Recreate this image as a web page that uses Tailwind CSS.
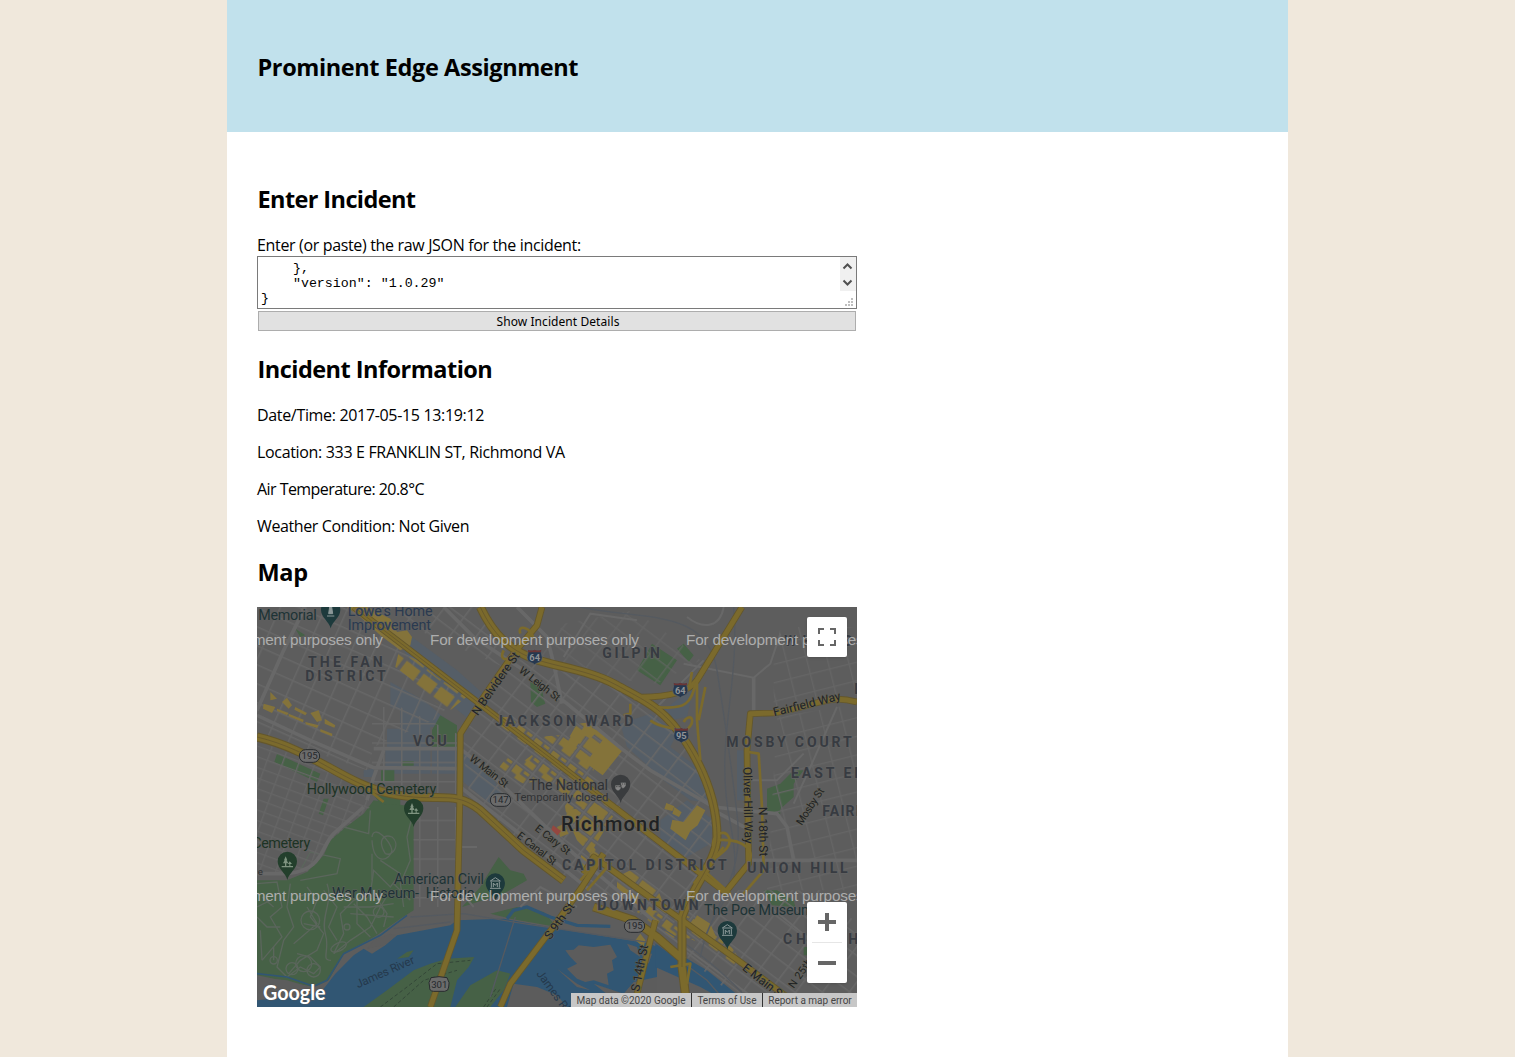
<!DOCTYPE html>
<html lang="en">
<head>
<meta charset="utf-8">
<title>Prominent Edge Assignment</title>
<script src="https://cdn.jsdelivr.net/npm/@tailwindcss/browser@4"></script>
</head>
<body class="bg-[#f0e8dc] text-black font-['Open_Sans',sans-serif] h-[1057px] overflow-hidden">
<div class="w-[1061px] ml-[227px] h-[1057px] bg-white">
  <header class="h-[132px] bg-[#c1e1ec] pl-[30.500px] pt-[51px]">
    <h1 class="text-[23.500px] leading-8 font-bold whitespace-nowrap tracking-[-0.4px]">Prominent Edge Assignment</h1>
  </header>
  <main class="pl-[30px] pt-[51px] w-[630px]">
    <h2 class="pl-[0.5px] text-[23.500px] leading-8 font-bold tracking-[-0.6px]">Enter Incident</h2>
    <p class="mt-5 text-[16px] leading-5 h-[21px] whitespace-nowrap tracking-[-0.34px]">Enter (or paste) the raw JSON for the incident:</p>
    <div class="relative w-[600px] h-[53px] border border-[#7a7a7a] bg-white pl-[3px] pt-1 overflow-hidden">
<pre class="font-['Liberation_Mono',monospace] text-[13.300px] leading-[15px]">    },
    "version": "1.0.29"
}</pre>
      <div class="absolute right-0 top-0 w-4 h-[34px] bg-[#f0f0f0]">
        <svg class="block" width="16" height="34" viewBox="0 0 16 34" fill="none" stroke="#505050" stroke-width="2"><path d="M3.500 11.500 7.500 7.500l4 4M3.500 23.500 7.500 27.500l4-4"/></svg>
      </div>
      <svg class="absolute right-[3px] bottom-[2px]" width="8" height="8" fill="#bfbfbf"><path d="M6 0h2v2H6zM3 3h2v2H3zM6 3h2v2H6zM0 6h2v2H0zM3 6h2v2H3zM6 6h2v2H6z"/></svg>
    </div>
    <button class="block mt-[2px] ml-px w-[598px] h-5 border border-[#adadad] bg-[#e1e1e1] text-[12px] leading-[19px] font-['Noto_Sans',sans-serif] text-center"><span class="tracking-[0.07px] pl-[2px]">Show Incident Details</span></button>
    <h2 class="mt-[22px] pl-[0.5px] text-[23.500px] leading-8 font-bold tracking-[-0.52px]">Incident Information</h2>
    <div class="mt-5 flex flex-col gap-4 text-[16px] leading-[21px] whitespace-nowrap tracking-[-0.33px]">
      <p>Date/Time: 2017-05-15 13:19:12</p>
      <p>Location: 333 E FRANKLIN ST, Richmond VA</p>
      <p class="tracking-[-0.55px]">Air Temperature: 20.8°C</p>
      <p class="tracking-[-0.38px]">Weather Condition: Not Given</p>
    </div>
    <h2 class="mt-[19px] pl-[0.5px] text-[23.500px] leading-8 font-bold tracking-[-0.3px]">Map</h2>
    <div class="relative mt-[19px] w-[600px] h-[400px] overflow-hidden bg-[#5d5d5d]">
      <svg class="block" width="600" height="400" viewBox="0 0 1800 1200" font-family="Roboto, sans-serif">
        <defs>
          <pattern id="grid" width="64" height="50" patternUnits="userSpaceOnUse" patternTransform="rotate(37)"><path d="M0 2H64M2 0V50" stroke="#676767" stroke-width="5" fill="none"/></pattern>
          <pattern id="shops" width="64" height="50" patternUnits="userSpaceOnUse" patternTransform="rotate(37)"><path d="M9 9H34V26H60V45H28V34H9zM42 9H60V18H42z" fill="#84733a"/></pattern>
          <pattern id="blocks" width="64" height="50" patternUnits="userSpaceOnUse" patternTransform="rotate(37)"><path d="M8 8H60V46H8z" fill="#84733a"/></pattern>
          <pattern id="fan" width="62" height="52" patternUnits="userSpaceOnUse" patternTransform="rotate(24)"><path d="M0 2H62M2 0V52" stroke="#676767" stroke-width="5" fill="none"/></pattern>
          <pattern id="fine" width="46" height="30" patternUnits="userSpaceOnUse" patternTransform="rotate(20)"><path d="M0 2H46M2 0V30" stroke="#656565" stroke-width="4" fill="none"/></pattern>
          <pattern id="sq" width="54" height="58" patternUnits="userSpaceOnUse"><path d="M0 2H54M2 0V58" stroke="#676767" stroke-width="5" fill="none"/></pattern>
          <pattern id="east" width="60" height="54" patternUnits="userSpaceOnUse" patternTransform="rotate(-14)"><path d="M0 2H60M2 0V54" stroke="#656565" stroke-width="4" fill="none"/></pattern>
          <path id="pin" d="M0 42C-5 20-29 10-29-14a29 29 0 0 1 58 0C29 10 5 20 0 42z"/>
          <g id="museum" fill="none" stroke="#8b9898" stroke-width="3"><path d="M-15-18 0-28 15-18zM-12-16V2M12-16V2M-16 4H16M-6 0v-12l6 7 6-7V0"/></g>
          <g id="tree" fill="#7f9480"><path d="M-5-32-10-20h2l-5 9h6v8h4v-8h6l-5-9h2zM7-17 2-9h4v6h3v-6h5zM-17-3h34v4h-34z"/></g>
          <g id="shield"><path d="M-20-20Q-10-15 0-20 10-15 20-20C17-8 26 0 21 11 16 20 5 19 0 25-5 19-16 20-21 11-26 0-17-8-20-20z" fill="#26384f" stroke="#5f6468" stroke-width="2"/><path d="M-20-20Q-10-15 0-20 10-15 20-20L19-12H-19z" fill="#6b3535"/></g>
        </defs>
        <rect width="1800" height="1200" fill="#5d5d5d"/>

        <!-- campus and hospital areas -->
        <g fill="#555e67">
          <path d="M465 90 600 190 700 280 640 340 590 300 500 230 470 180 440 130zM400 225 500 280 600 365 520 360 520 420 390 420 390 365 430 365 430 310 400 300zM385 425H520V500H385zM525 430H600V500H525zM320 490 350 485 350 510 320 510zM615 430 700 500 760 600 700 590 612 520z"/>
          <path d="M1090 350 1180 320 1260 380 1240 420 1320 480 1370 590 1300 580 1220 520 1110 420zM1220 310 1310 240 1290 330 1240 340zM1440 430h32v150h-32zM1210 640 1290 580 1370 640 1360 710 1290 750 1210 700z"/>
        </g>
        <!-- parks -->
        <g fill="#466146">
          <path d="M0 820 90 820 150 795 200 745 220 700 260 665 320 620 335 600 350 580 470 600 470 910 430 935 360 985 260 1040 215 1120 170 1140 0 1105z"/>
          <path d="M60 440 190 500 180 525 52 465zM550 325 600 355V420H525V370zM372 490H412V522H372zM435 462H470V476H435zM350 565 430 570 430 595 370 590zM115 65 145 85 130 90zM200 575 215 575 198 625 185 620z"/>
          <path d="M820 225 855 245 860 275 865 290 840 300 822 285zM1140 190 1185 110 1260 160 1210 235zM1260 125 1280 110 1310 145 1295 165zM1530 545 1570 530 1610 490 1640 490 1610 530 1610 570 1560 615 1530 615zM1520 850 1560 850 1610 880 1615 900 1545 895zM1535 598h35v22h-35z"/>
          <path d="M725 750 760 790 800 800 810 820 740 860 615 900 670 840 700 790zM700 920 780 900 860 915 900 960 760 935zM1640 1020h30v25h-30z"/>
        </g>
        <!-- cemetery paths -->
        <g fill="none" stroke="#5b665c" stroke-width="4">
          <path d="M470 610 450 690 460 760 430 830 440 900M345 690C350 650 400 700 405 730 400 760 350 780 345 700M385 740C360 700 380 680 405 690 430 710 410 750 385 740M370 760 430 800 400 840 350 790 340 860 290 880 250 920 260 980 230 1040M150 840 180 880 160 930 200 980 180 1030 130 1060 95 1100M100 830 90 900 110 960 80 1000 60 1080 90 1110 130 1080 170 1100 190 1080 160 1050 120 1040M0 830 60 825 75 900 40 930 75 990 15 1060M15 870 50 900M10 970 15 1060M50 1020v40M130 820 240 800 250 755 160 735 130 790M290 890 330 930 360 980M400 850 370 900 340 960 280 1000 230 1040M140 950 190 960M280 920 410 930M110 1010 180 950 150 900M340 610 335 680 260 660"/>
          <path d="M210 830C230 880 190 930 205 980S190 1060 222 1060M200 850 240 900 215 960 240 1000M300 880 300 950 340 990M350 860 390 920 380 960M260 900 340 900 410 890M345 740 345 820M410 830 460 880M0 900 40 880M0 930 30 960 70 960M120 870 150 860"/>
          <circle cx="160" cy="940" r="28"/><circle cx="140" cy="1070" r="24"/><circle cx="170" cy="1090" r="20"/><circle cx="105" cy="1085" r="18"/><circle cx="50" cy="1060" r="11"/><circle cx="270" cy="960" r="9"/><circle cx="365" cy="915" r="16"/><ellipse cx="245" cy="1020" rx="25" ry="12" transform="rotate(-25 245 1020)"/>
        </g>

        <!-- river -->
        <path fill="#315673" d="M0 1180 150 1165 200 1145 235 1100 290 1045 320 1025 345 1040 385 1015 420 985 580 955 600 940 740 935 900 965 1180 1010 1200 1020V1200H0z"/>
        <path fill="#315673" d="M1195 1010 1290 1055 1350 1090 1450 1170 1440 1200 1330 1140 1195 1080z"/>
        <path fill="none" stroke="#315673" stroke-width="5" d="M0 1100 90 1110 170 1138 210 1120 260 1040 370 985 450 925"/>
        <path fill="none" stroke="#315673" stroke-width="10" d="M750 935 770 910 810 900 880 930 960 955 1060 958"/>
        <g fill="#5c5c5c">
          <path d="M0 1110 90 1120 190 1150 120 1163 0 1158zM925 1030 950 1028 965 1015 1010 1020 1060 1013 1080 1050 1065 1060 1070 1090 1050 1100 1055 1135 1010 1120 985 1125 960 1115 930 1085 960 1070 940 1050zM1010 1130 1100 1160 1130 1125 1200 1110V1200H1100zM1110 1010 1140 1020 1150 1050 1120 1030zM1150 1040 1185 1040 1175 1070zM770 1130 840 1140 900 1165 930 1200H750zM330 1025 380 1015 420 985 400 980 350 1000zM900 1085 960 1130 1000 1150 960 1140z"/>
        </g>
        <g fill="#466146">
          <path d="M320 1200 390 1150 470 1090 520 1070 570 1055 652 1050 635 1080 600 1120 580 1200zM595 1200 640 1135 720 1090 760 1100 740 1150 700 1200zM420 1055 450 1035 470 1030 455 1050z"/>
        </g>
        <path d="M370 1200 450 1140 540 1070 640 1060M410 1200 500 1120 600 1090M680 1200 720 1140M690 1200 730 1145" fill="none" stroke="#344738" stroke-width="3" stroke-dasharray="11 7"/>

        <!-- street grids -->
        <path fill="url(#fan)" d="M0 0H270L600 250 550 330 350 420 330 490 0 375z"/>
        <path fill="url(#fine)" d="M0 400 300 520 340 600 220 700 150 795 0 800z"/>
        <path fill="url(#sq)" d="M345 300 430 300 600 380V560H345zM470 600H600V900H470z"/>
        <path fill="url(#grid)" d="M320 0H660L760 150 1080 240 1220 320 1320 470 1380 620 1360 760 1250 950 1000 880 640 580 612 400 740 180z"/>
        <path fill="url(#grid)" d="M1290 900 1420 850 1700 850 1800 950V1200H1470L1290 1050z"/>
        <path fill="url(#east)" d="M1570 60H1800V260L1550 310V160zM1560 330 1800 290V850H1530z"/>
        <path fill="url(#grid)" d="M850 150 920 50 1130 10 1260 100 1330 160 1200 230 1100 220z" opacity=".6"/>

        <!-- commercial blocks -->
        <g fill="#84733a">
          <path d="M270 0 330 0 400 35 420 75 450 70 465 90 460 115 430 130 370 85 310 30z"/>
          <path d="M40 255 60 275 40 280zM20 290 55 300 45 318 18 305zM75 285 90 272 105 295 95 305zM60 305 95 318 90 325 60 312zM115 300 150 318 145 325 112 308zM160 318 185 310 195 340 180 345zM95 320 140 338 138 346 95 328zM145 345 185 355 180 363 146 352zM203 335 235 355 232 362 203 350zM190 366 226 380 225 388 190 374z"/>
          <path d="M985 350 1022 372 1000 395 970 378zM945 385 970 400 950 432 923 418z"/>
          <path d="M1228 588 1252 598 1246 612 1222 606zM1252 600 1274 616 1266 630 1246 620zM1246 638 1280 645 1320 595 1345 610 1322 655 1300 672 1286 700 1240 665zM1135 1000 1150 980 1165 1000 1160 1020zM900 660 920 650 935 680 910 690z"/>
        </g>
        <path fill="url(#blocks)" d="M425 135 480 160 540 210 600 250 640 260 580 310 540 290 460 215 415 180zM960 350 1010 345 1060 400 985 470 920 420zM930 610 1050 590 1060 640 1000 740 960 700 940 655zM1080 810 1120 790 1200 840 1230 920 1150 910 1080 860z"/>
        <path fill="url(#shops)" d="M720 330 760 330 840 390 960 380 1010 460 1010 540 1090 600 1060 640 980 720 930 640 920 570 850 520 800 530 720 490 750 450 790 470 830 440 770 400 720 360zM970 740 1010 720 1040 760 980 800zM1150 900 1210 900 1300 930 1390 970 1450 1060 1440 1085 1340 1010 1280 990 1220 1000 1130 930z"/>
        <path fill="#84733a" d="M1320 925 1360 950 1375 985 1350 995 1300 960zM1042 392 1060 402 1066 396 1098 428 1037 505 986 468z"/>
        <path fill="#944740" d="M888 655 912 672 898 690 880 675z"/>

        <g fill="none" stroke="#686868" stroke-width="11">
          <path d="M145 0 80 130 0 310M0 325 160 400 350 482 600 485M350 425H610L700 500 950 740 1200 950M380 430 350 510 330 580M0 800H90C200 790 190 720 230 680L320 600M560 0 650 90 800 190 930 290 1100 430 1180 490 1370 600 1560 620 1590 660 1610 760M610 540 800 690 1000 850M780 0 870 90 890 170 915 290M1490 210V320M1480 760H1800M1480 670 1370 610" />
          <path stroke-width="6" d="M1340 160 1200 300M1280 170 1490 212 1540 170 1570 80M1200 960 1500 1180M1610 590 1660 480 1740 300M1540 900 1760 1080M1400 0C1390 60 1340 70 1290 30M920 150 1000 20 1140 40M1480 520H1560L1640 440M600 720H660M600 840 650 900M790 900 850 840 960 900"/>
        </g>
        <g fill="none" stroke="#555a60" stroke-width="4">
          <path d="M970 0C1150 40 1350 0 1380 190S1420 450 1440 620 1400 850 1340 1000M1430 0C1450 250 1370 400 1420 650S1370 850 1330 1050M460 930 620 920 800 950 1200 1010 1350 1120 1420 1200M410 965 580 945M775 930 700 1170M1210 960C1400 1080 1450 1160 1500 1200"/>
        </g>

        <!-- highways: dark casing with lighter centre -->
        <g fill="none" stroke="#64572c" stroke-linejoin="round">
          <g stroke-width="27"><path d="M0 390C170 430 260 530 400 560S590 545 670 610L800 730 920 820M670 0C710 85 760 130 830 155S1000 190 1080 235 1220 300 1290 410 1380 620 1380 690 1300 850 1275 930V1080L1290 1200M1010 900 1130 940 1200 990 1280 1060"/></g>
          <g stroke-width="20"><path d="M855 0 840 55 770 140 680 270 610 380 608 600 600 970 520 1200M1455 0 1400 90 1320 220Q1280 275 1130 270M1800 285C1710 260 1690 295 1550 318L1480 320 1470 430 1475 770 1410 850M290 0 1410 860M1040 740 975 840 900 945 760 1130 730 1200M1195 940 1130 1200M980 800 1010 750 1450 1065 1590 1170"/></g>
        </g>
        <g fill="none" stroke="#7b6a2c" stroke-linejoin="round">
          <g stroke-width="21"><path d="M0 390C170 430 260 530 400 560S590 545 670 610L800 730 920 820M670 0C710 85 760 130 830 155S1000 190 1080 235 1220 300 1290 410 1380 620 1380 690 1300 850 1275 930V1080L1290 1200M1010 900 1130 940 1200 990 1280 1060"/></g>
          <g stroke-width="15"><path d="M855 0 840 55 770 140 680 270 610 380 608 600 600 970 520 1200M1455 0 1400 90 1320 220Q1280 275 1130 270M1800 285C1710 260 1690 295 1550 318L1480 320 1470 430 1475 770 1410 850M290 0 1410 860M1040 740 975 840 900 945 760 1130 730 1200M1195 940 1130 1200M980 800 1010 750 1450 1065 1590 1170"/></g>
          <g stroke-width="8"><path d="M1320 210V340L1330 460M1345 240 1325 340M1200 300C1300 310 1300 280 1320 220M1180 340C1220 370 1240 350 1270 380M1270 380C1330 350 1300 310 1280 345M1475 435 1505 440 1515 600 1520 790 1460 860M740 130C720 170 770 160 780 130M790 80C780 50 820 60 830 95M1120 290V320L1100 325M1370 720C1360 690 1400 660 1415 690S1390 740 1340 780M1370 700C1470 690 1500 740 1470 770M1400 720 1310 830M1340 790 1420 860M1240 1080 1300 1070 1290 1130M380 585 330 545M970 820 1030 750 1060 770 990 850M1305 195 1295 250"/></g>
        </g>
        <path d="M0 390C170 430 260 530 400 560S590 545 670 610L800 730 920 820M300 8 1050 583M670 0C710 85 760 130 830 155S1000 190 1080 235 1220 300 1290 410 1380 620 1380 690 1300 850 1275 930V1080" fill="none" stroke="#695a2c" stroke-width="3"/>

        <!-- route markers -->
        <g font-size="29" text-anchor="middle" fill="#25282b">
          <g fill="#6b6b6b" stroke="#292c2f" stroke-width="3"><rect x="127" y="428" width="61" height="38" rx="19"/><rect x="700" y="560" width="61" height="38" rx="19"/><rect x="1102" y="938" width="61" height="38" rx="19"/><path d="M522 1112Q546 1106 570 1112 580 1128 575 1140 575 1152 563 1153H530Q516 1152 518 1140 512 1128 522 1112z"/></g>
          <text x="158" y="457">195</text><text x="731" y="589">147</text><text x="1133" y="967">195</text><text x="547" y="1143">301</text>
        </g>
        <g font-size="28" font-weight="700" text-anchor="middle" fill="#8f9397">
          <use href="#shield" x="833" y="148"/><use href="#shield" x="1270" y="247"/><use href="#shield" x="1273" y="383"/>
          <text x="833" y="163">64</text><text x="1270" y="260">64</text><text x="1273" y="396">95</text>
        </g>

        <!-- place pins -->
        <use href="#pin" x="221" y="22" fill="#1d3a3c"/><path d="M210 27h22M215 20h12l-3-20h-6zM221-10v15" stroke="#8b9898" stroke-width="3" fill="#8b9898"/>
        <use href="#pin" x="470" y="618" fill="#233f2c"/><use href="#tree" x="470" y="620"/>
        <use href="#pin" x="91" y="777" fill="#233f2c"/><use href="#tree" x="91" y="780"/>
        <use href="#pin" x="715" y="842" fill="#1d3a3c"/><use href="#museum" x="715" y="840"/>
        <use href="#pin" x="1411" y="985" fill="#1d3a3c"/><use href="#museum" x="1411" y="981"/>
        <use href="#pin" x="1091" y="546" fill="#3a3c3e"/><path d="M1074 534h18v10q-9 16-18 0zM1091 526h16v10q-8 14-16 4z" fill="#858585" stroke="#3a3c3e" stroke-width="2"/><path d="M1078 539h3M1085 539h3M1096 531h2M1102 531h2" stroke="#303030" stroke-width="3"/>

        <!-- neighbourhoods -->
        <g font-size="42" font-weight="700" fill="#373b41" stroke="#626262" stroke-width="4" paint-order="stroke" stroke-linejoin="round">
          <text x="153" y="180" textLength="224">THE FAN</text><text x="145" y="222" textLength="241">DISTRICT</text>
          <text x="468" y="418" textLength="101">VCU</text><text x="1036" y="153" textLength="173">GILPIN</text>
          <text x="714" y="358" textLength="415">JACKSON WARD</text><text x="1408" y="420" textLength="376">MOSBY COURT</text>
          <text x="1602" y="513" textLength="256">EAST END</text><text x="1696" y="628" textLength="262">FAIRMOUNT</text>
          <text x="915" y="790" textLength="494">CAPITOL DISTRICT</text><text x="1021" y="909" textLength="304">DOWNTOWN</text>
          <text x="1471" y="799" textLength="301">UNION HILL</text><text x="1578" y="1011" textLength="380">CHURCH HILL</text>
          <text x="1582" y="117" textLength="350">WHITCOMB</text><text x="1792" y="260">E</text>
        </g>
        <text x="912" y="673" font-size="60" font-weight="500" fill="#202224" stroke="#6a6659" stroke-width="4" paint-order="stroke" textLength="296">Richmond</text>
        <!-- places -->
        <g font-size="43" stroke-width="3" stroke="#606060" paint-order="stroke">
          <g fill="#1d3335"><text x="4" y="39" textLength="175">Memorial</text><text x="411" y="832" textLength="270">American Civil</text><text x="225" y="874" textLength="427" xml:space="preserve">War Museum-  Historic</text><text x="1341" y="925" textLength="329">The Poe Museum</text></g>
          <g fill="#2a3a50"><text x="272" y="27" textLength="255">Lowe's Home</text><text x="272" y="70" textLength="250">Improvement</text></g>
          <g fill="#1c3324"><text x="149" y="561" textLength="389">Hollywood Cemetery</text><text x="-14" y="724" textLength="174">Cemetery</text></g>
          <g fill="#303234"><text x="816" y="549" textLength="237">The National</text><text x="772" y="581" font-size="34" textLength="282">Temporarily closed</text><text x="2" y="805" font-size="29">e</text></g>
        </g>
        <!-- streets -->
        <g font-size="36" fill="#202224" stroke="#646257" stroke-width="3" paint-order="stroke">
          <text transform="translate(662 328) rotate(-55)" textLength="222">N Belvidere St</text>
          <text transform="translate(784 194) rotate(38)" font-size="32" textLength="146" word-spacing="3">W Leigh St</text>
          <text transform="translate(635 458) rotate(38)" font-size="32" textLength="138" word-spacing="3">W Main St</text>
          <text transform="translate(1552 328) rotate(-14)" textLength="207">Fairfield Way</text>
          <text transform="translate(1459 480) rotate(89)" textLength="230">Oliver Hill Way</text>
          <text transform="translate(1505 600) rotate(89)" textLength="148">N 18th St</text>
          <text transform="translate(1634 657) rotate(-57)" font-size="32" textLength="126">Mosby St</text>
          <text transform="translate(832 668) rotate(38)" font-size="32" textLength="124" word-spacing="3">E Cary St</text>
          <text transform="translate(778 690) rotate(38)" font-size="32" textLength="140" word-spacing="3">E Canal St</text>
          <text transform="translate(880 1000) rotate(-54)" textLength="126">S 9th St</text>
          <text transform="translate(1146 1155) rotate(-79)" textLength="142">S 14th St</text>
          <text transform="translate(1454 1087) rotate(38)" textLength="152">E Main St</text>
          <text transform="translate(1610 1146) rotate(-55)" font-size="32" textLength="140">N 25th St</text>
        </g>
        <g font-size="35" fill="#25394c"><text transform="translate(303 1144) rotate(-24)" textLength="188">James River</text><text transform="translate(837 1100) rotate(54)" textLength="188">James River</text></g>
        <!-- watermark tiles -->
        <g font-family="Liberation Sans, sans-serif" font-size="46" fill="#adadad">
          <text x="-249" y="114" textLength="627">For development purposes only</text><text x="519" y="114" textLength="627">For development purposes only</text><text x="1287" y="114" textLength="627">For development purposes only</text>
          <text x="-249" y="882" textLength="627">For development purposes only</text><text x="519" y="882" textLength="627">For development purposes only</text><text x="1287" y="882" textLength="627">For development purposes only</text>
        </g>
        <text x="18" y="1179" font-family="Lato, sans-serif" font-weight="700" font-size="64" fill="#fff" stroke="#555" stroke-width="3" paint-order="stroke" textLength="188" lengthAdjust="spacingAndGlyphs">Google</text>
      </svg>
      <div class="absolute left-[550px] top-[10px] size-10 rounded-xs bg-white shadow flex items-center justify-center">
        <svg width="18" height="18" fill="none" stroke="#666" stroke-width="2"><path d="M1 6V1h5M12 1h5v5M17 12v5h-5M6 17H1v-5"/></svg>
      </div>
      <div class="absolute left-[550px] top-[295px] w-10 h-[81px] rounded-xs bg-white shadow flex flex-col items-center">
        <svg width="18" height="18" class="mt-[11px]" fill="#666"><path d="M7 0h4v7h7v4h-7v7H7v-7H0V7h7z"/></svg>
        <div class="mt-[11px] w-[30px] h-px bg-[#e6e6e6]"></div>
        <div class="mt-[18px] w-[18px] h-1 bg-[#666]"></div>
      </div>
      <div class="absolute right-0 bottom-0 h-[14px] flex font-[Roboto,sans-serif] text-[10px] leading-[15px] text-[#444] whitespace-nowrap">
        <span class="w-[120px] text-center bg-[#c7c7c7]">Map data ©2020 Google</span><span class="w-[71px] text-center bg-[#c7c7c7] border-l border-[#333]">Terms of Use</span><span class="w-[95px] text-center bg-[#c7c7c7] border-l border-[#333]">Report a map error</span>
      </div>
    </div>
  </main>
</div>
</body>
</html>
